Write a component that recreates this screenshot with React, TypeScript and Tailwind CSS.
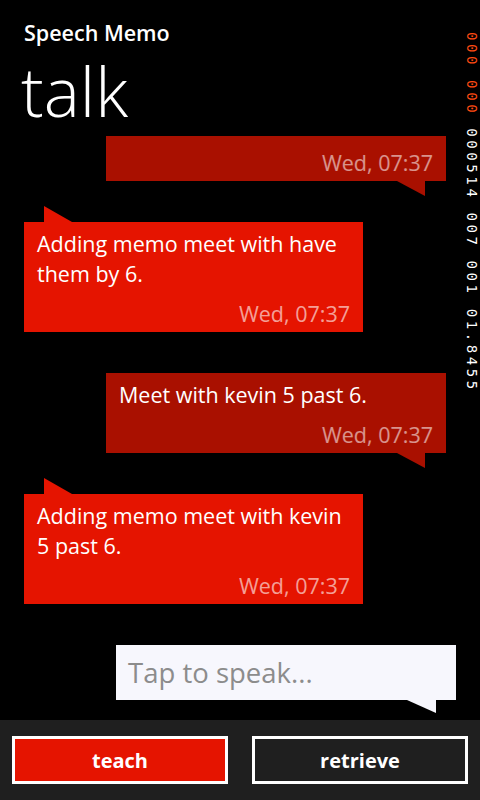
import React from 'react'

const font = { fontFamily: '"Open Sans", "Noto Sans", sans-serif' }

interface Memo {
  text?: string
  mine: boolean
}

const memos: Memo[] = [
  { mine: true },
  { text: 'Adding memo meet with have them by 6.', mine: false },
  { text: 'Meet with kevin 5 past 6.', mine: true },
  { text: 'Adding memo meet with kevin 5 past 6.', mine: false },
]

function Bubble({ memo, first }: { memo: Memo; first: boolean }) {
  const gap = first ? '' : 'mt-[41px]'
  if (memo.mine) {
    return (
      <div className={`relative self-end mr-[34px] w-[340px] bg-[#a91000] px-[13px] pb-[3px] ${memo.text ? 'pt-[7px]' : 'pt-[12px]'} ${gap}`}>
        {memo.text && <p className="text-[21.5px] leading-[30px] text-white">{memo.text}</p>}
        <p className={`text-right text-[21.5px] leading-[30px] text-white/55 ${memo.text ? 'mt-[10px]' : ''}`}>Wed, 07:37</p>
        <svg className="absolute top-full right-[21px]" width="28" height="15" viewBox="0 0 28 15">
          <polygon points="0,0 28,0 28,15" fill="#a91000" />
        </svg>
      </div>
    )
  }
  return (
    <div className={`relative self-start ml-[24px] w-[339px] bg-[#e51400] px-[13px] pt-[7px] pb-[3px] ${gap}`}>
      <p className="text-[21.5px] leading-[30px] text-white">{memo.text}</p>
      <p className="mt-[10px] text-right text-[21.5px] leading-[30px] text-white/60">Wed, 07:37</p>
      <svg className="absolute bottom-full left-[20px]" width="28" height="16" viewBox="0 0 28 16">
        <polygon points="0,0 0,16 28,16" fill="#e51400" />
      </svg>
    </div>
  )
}

// frame rate counters shown down the right edge
function Counters() {
  return (
    <div
      className="absolute right-[2px] top-[32px] text-[14px] leading-[12px] tracking-[3.6px] [writing-mode:vertical-rl]"
      style={{ fontFamily: '"DejaVu Sans Mono", monospace' }}
    >
      <span className="text-[#ff4a12]">000 000 </span>
      <span className="text-white">000514  007 001  01.8455</span>
    </div>
  )
}

export default function App() {
  return (
    <div className="relative flex h-[800px] w-[480px] flex-col overflow-hidden bg-black" style={font}>
      <Counters />
      <h2 className="ml-[24px] mt-[19px] text-[21.5px] font-semibold leading-[28px] text-white">Speech Memo</h2>
      <h1 className="ml-[21px] mt-[10px] text-[68px] font-light leading-[68px] text-white">talk</h1>

      <div className="mt-[11px] flex flex-col">
        {memos.map((m, i) => (
          <Bubble key={i} memo={m} first={i === 0} />
        ))}

        <div className="relative mt-[41px] ml-[116px] flex h-[55px] w-[340px] items-center bg-[#f7f7fd] px-[12px]">
          <span className="text-[27.5px] text-[#8c8c8c]">Tap to speak...</span>
          <svg className="absolute top-full right-[20px]" width="29" height="13" viewBox="0 0 29 13">
            <polygon points="0,0 29,0 29,13" fill="#f7f7fd" />
          </svg>
        </div>
      </div>

      <div className="mt-auto flex h-[80px] gap-[24px] bg-[#1f1f1f] px-[12px] pt-[16px]">
        <button className="h-[48px] w-[216px] border-[3px] border-white bg-[#e51400] pt-[2px] text-[20px] font-bold text-white">
          teach
        </button>
        <button className="h-[48px] w-[216px] border-[3px] border-white bg-[#1f1f1f] pt-[2px] text-[20px] font-bold text-white">
          retrieve
        </button>
      </div>
    </div>
  )
}
